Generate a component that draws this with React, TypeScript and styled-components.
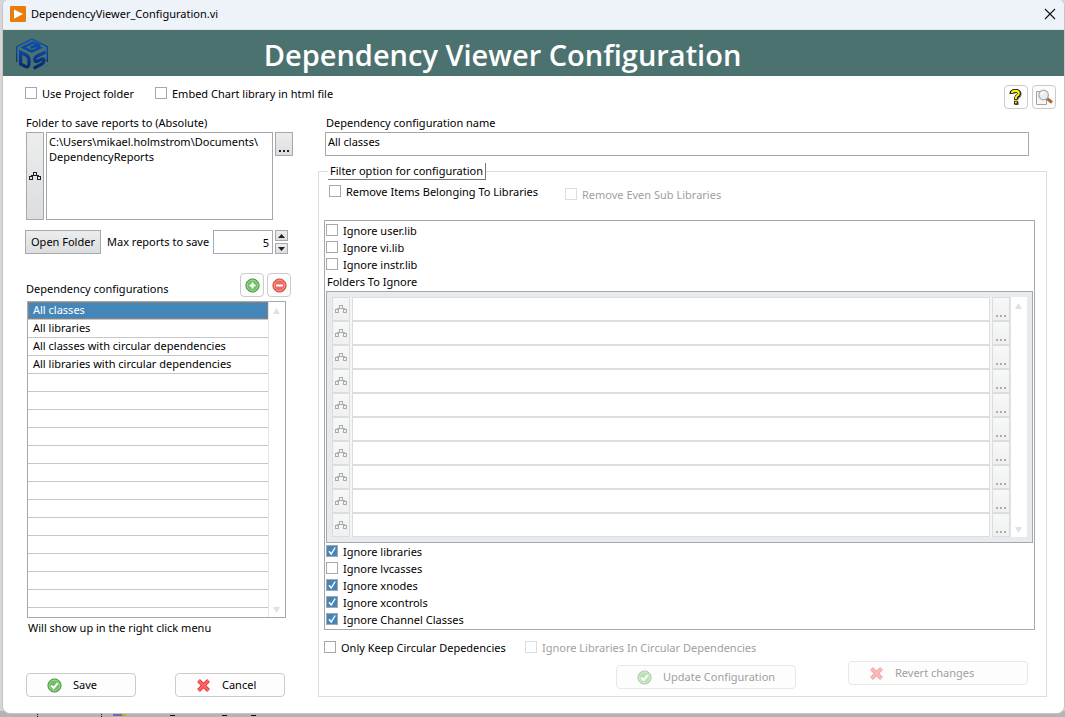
import React, { useState } from "react";
import styled, { createGlobalStyle, css } from "styled-components";

const line = "#a6a8ab";
const faint = "#dcdddf";
const accent = "#4586b8";
const font = '"Noto Sans", "Open Sans", sans-serif';

const Global = createGlobalStyle`
  *, *::before, *::after { box-sizing: border-box; }
  html, body, #root { height: 100%; }
  body {
    margin: 0;
    background: #b4b4b4;
    font: 11px/16px ${font};
    color: #000;
  }
  button, input, textarea { font: inherit; color: inherit; margin: 0; border-radius: 0; }
  button { cursor: pointer; padding: 0; }
  button:disabled { cursor: default; }
  ul { list-style: none; margin: 0; padding: 0; }
`;

const Desktop = styled.div`
  display: flex;
  flex-direction: column;
  min-height: 100%;
  padding-left: 2px;
  background: linear-gradient(#d6d6d6 0 711px, #b4b4b4 711px);
`;

const Backdrop = styled.svg`
  display: block;
  flex: none;
`;

const Window = styled.div`
  flex: 1;
  display: flex;
  flex-direction: column;
  background: #fff;
  border: 1px solid #c4c4c4;
  border-top: 0;
  border-radius: 6px 6px 8px 8px;
  overflow: hidden;
`;

const TitleBar = styled.header`
  display: flex;
  align-items: center;
  gap: 5px;
  height: 30px;
  padding: 0 8px 2px 7px;
  background: #eef3fa;
  border-bottom: 1px solid #dfe3e6;
`;

const TitleText = styled.span`
  flex: 1;
`;

const CloseButton = styled.button`
  display: flex;
  border: 0;
  background: none;
`;

const Banner = styled.div`
  display: flex;
  align-items: center;
  height: 46px;
  padding: 0 108px 0 12px;
  background: #4c7270;
`;

const Heading = styled.h1`
  flex: 1;
  margin: 0;
  text-align: center;
  color: #fff;
  font-family: "Open Sans", "Noto Sans", sans-serif;
  font-size: 29px;
  line-height: 40px;
  font-weight: 600;
  padding-top: 4px;
`;

const Options = styled.div`
  display: flex;
  align-items: flex-start;
  gap: 4px;
  height: 39px;
  padding: 9px 8px 0 22px;
`;

const OptionChecks = styled.div`
  flex: 1;
  display: grid;
  grid-template-columns: 130px 1fr;
`;

const Check = styled.label<{ $off?: boolean }>`
  display: flex;
  align-items: center;
  gap: 5px;
  height: 17px;
  white-space: nowrap;
  color: ${(p) => (p.$off ? "#a0a0a0" : "#000")};
`;

const Box = styled.input`
  && { margin-bottom: 1px; }
  appearance: none;
  flex: none;
  width: 12px;
  height: 12px;
  border: 1px solid ${line};
  background: #fff;
  &:disabled { border-color: ${faint}; }
  &:checked {
    background: ${accent} url("data:image/svg+xml,%3Csvg xmlns='http://www.w3.org/2000/svg' viewBox='0 0 10 10'%3E%3Cpath d='M2 5.2L4.2 8L8.2 1.5' fill='none' stroke='white' stroke-width='1.4'/%3E%3C/svg%3E");
  }
`;

const Columns = styled.main`
  flex: 1;
  display: grid;
  grid-template-columns: 268px minmax(0, 1fr);
  gap: 25px;
  padding: 0 17px 16px 22px;
`;

const Column = styled.section`
  display: flex;
  flex-direction: column;
  min-width: 0;
`;

const FieldLabel = styled.label`
  display: block;
  line-height: 16px;
  padding-left: 1px;
`;

const raised = css`
  border: 1px solid ${line};
  background: linear-gradient(#eceded, #dcdddf);
  &:disabled {
    border-color: ${faint};
    background: linear-gradient(#f6f7f7, #f0f0f1);
  }
`;

const PathControl = styled.div`
  display: flex;
  align-items: flex-start;
  gap: 2px;
  margin-top: 1px;
  padding-left: 1px;
`;

const GrayButton = styled.button<{ $w: number; $h: number }>`
  ${raised}
  flex: none;
  display: flex;
  align-items: center;
  justify-content: center;
  width: ${(p) => p.$w}px;
  height: ${(p) => p.$h}px;
  white-space: nowrap;
`;

const PathArea = styled.textarea`
  flex: 1;
  min-width: 0;
  height: 88px;
  padding: 1px 0 1px 2px;
  border: 1px solid ${line};
  background: #fff;
  line-height: 15px;
  resize: none;
  overflow: hidden;
  white-space: pre;
`;

const LimitRow = styled.div`
  display: flex;
  align-items: center;
  height: 24px;
  margin: 10px 5px 0 0;
`;

const LimitLabel = styled.label`
  flex: 1;
  min-width: 0;
  padding-left: 6px;
  white-space: nowrap;
`;

const LimitInput = styled.input`
  width: 60px;
  height: 24px;
  padding: 0 3px;
  border: 1px solid ${line};
  text-align: right;
`;

const Spinner = styled.div`
  display: grid;
  gap: 2px;
  width: 15px;
  padding-left: 2px;
`;

const ListHead = styled.div`
  display: flex;
  align-items: flex-end;
  gap: 3px;
  height: 24px;
  margin-top: 19px;
  padding: 0 2px 0 1px;
`;

const ListTitle = styled.h2`
  flex: 1;
  margin: 0;
  font-size: 11px;
  line-height: 16px;
  font-weight: 400;
`;

const RoundButton = styled.button<{ $w?: number }>`
  flex: none;
  display: flex;
  align-items: center;
  justify-content: ${(p) => (p.$w ? "flex-start" : "center")};
  gap: 11px;
  width: ${(p) => p.$w ?? 24}px;
  height: 24px;
  padding-left: ${(p) => (p.$w ? 20 : 0)}px;
  border: 1px solid #cbcbcb;
  border-radius: 4px;
  background: #fdfdfd;
  white-space: nowrap;
  &:disabled {
    color: #a0a0a0;
    border-color: #e8e8e8;
    svg { opacity: 0.45; }
  }
`;

const ListBox = styled.div`
  display: flex;
  height: 317px;
  margin: 4px 7px 0 2px;
  border: 1px solid ${line};
`;

const Items = styled.ul`
  flex: 1;
  overflow: hidden;
`;

const Item = styled.li`
  height: 18px;
  border-bottom: 1px solid #c6c7c9;
`;

const ItemButton = styled.button<{ $on: boolean }>`
  display: block;
  width: 100%;
  height: 17px;
  padding: 0 0 2px 4px;
  border: 1px ${(p) => (p.$on ? "dotted #c08050" : "solid transparent")};
  background: ${(p) => (p.$on ? accent : "#fff")};
  color: ${(p) => (p.$on ? "#fff" : "#000")};
  text-align: left;
  line-height: 13px;
`;

const Scroll = styled.div`
  flex: none;
  display: flex;
  flex-direction: column;
  justify-content: space-between;
  align-items: center;
  width: 17px;
  padding: 6px 1px 4px 0;
  background: #fff;
  border-left: 1px solid #e2e2e2;
`;

const Note = styled.p`
  margin: 2px 0 0 3px;
`;

const Actions = styled.div`
  display: flex;
  gap: 39px;
  margin-top: 37px;
  padding-left: 1px;
`;

const NameInput = styled.input`
  width: calc(100% - 25px);
  height: 24px;
  padding: 0 2px 5px;
  border: 1px solid ${line};
  && { margin: 1px 0 0 7px; }
`;

const NameLabel = styled(FieldLabel)`
  padding-left: 8px;
`;

const Group = styled.fieldset`
  flex: 1;
  min-width: 0;
  margin: 7px 0 0;
  padding: 0 11px 0 5px;
  border: 1px solid ${faint};
`;

const Legend = styled.legend`
  margin-left: 4px;
  padding: 0 2px;
  height: 17px;
  line-height: 16px;
  border-right: 1px solid #777;
  border-bottom: 1px solid #777;
`;

const LibraryRow = styled.div`
  display: grid;
  grid-template-columns: 236px 1fr;
  align-items: end;
  height: 23px;
  padding: 3px 0 0 5px;
  & > :first-child { align-self: start; }
`;

const CircularRow = styled.div`
  display: grid;
  grid-template-columns: 201px 1fr;
`;

const Panel = styled.div`
  margin: 17px 0 9px;
  padding: 1px;
  border: 1px solid ${line};
`;

const PanelTitle = styled.h3`
  margin: 0;
  padding-left: 1px;
  font-size: 11px;
  line-height: 17px;
  font-weight: 400;
`;

const Frame = styled.div`
  display: flex;
  margin-top: 1px;
  padding: 5px;
  border: 1px solid ${line};
  background: #e7ebee;
`;

const Rows = styled.div`
  flex: 1;
  min-width: 0;
`;

const FolderRow = styled.div`
  display: flex;
  gap: 2px;
  height: 24px;
  background: #f4f5f6;
`;

const FolderInput = styled.input`
  flex: 1;
  min-width: 0;
  height: 24px;
  border: 1px solid ${faint};
  background: #fff;
`;

const GroupActions = styled.div`
  display: flex;
  justify-content: flex-end;
  align-items: flex-start;
  gap: 52px;
  margin-top: 5px;
  padding-right: 7px;
`;

const Lowered = styled.div`
  padding-top: 4px;
`;

const Tree = ({ color = "#222" }: { color?: string }) => (
  <svg width="12" height="9" viewBox="0 0 12 9" fill="none" stroke={color} shapeRendering="crispEdges">
    <path d="M4.5 .5h3v3h-3zM.5 4.5h3v3h-3zM8.5 4.5h3v3h-3zM4 3.5H2.5V4M8 3.5H9.5V4" />
  </svg>
);

const Dots = ({ color = "#222" }: { color?: string }) => (
  <svg width="12" height="16" viewBox="0 0 12 16" fill={color} shapeRendering="crispEdges">
    <path d="M1 14h2v2H1zM5 14h2v2H5zM9 14h2v2H9z" />
  </svg>
);

const Triangle = ({ down, color = "#dfe1e3", w = 7, h = 6 }: { down?: boolean; color?: string; w?: number; h?: number }) => (
  <svg width={w} height={h} viewBox="0 0 8 6" preserveAspectRatio="none" fill={color}>
    <path d={down ? "M0 0h8L4 6z" : "M0 6h8L4 0z"} />
  </svg>
);

const Badge = ({ kind }: { kind: "plus" | "minus" | "ok" }) => {
  const red = kind === "minus";
  const mark = {
    plus: "M7.5 4.5v6M4.5 7.5h6",
    minus: "M4 7.5h7",
    ok: "M4.2 7.6l2.4 2.4L10.8 5.2",
  }[kind];
  return (
    <svg width="15" height="15" viewBox="0 0 15 15" fill="none">
      <circle cx="7.5" cy="7.5" r="6.6" fill={red ? "#e2473f" : "#4fa845"} stroke={red ? "#cf4a43" : "#4a9a41"} />
      <circle cx="7.5" cy="7.5" r="5.4" fill={red ? "#ee6a60" : "#72bf63"} stroke={red ? "#f7b3ad" : "#b9e2b0"} strokeWidth=".8" />
      <path d={mark} stroke="#fff" strokeWidth="2" />
    </svg>
  );
};

const Cross = () => (
  <svg width="15" height="15" viewBox="0 0 15 15" fill="none">
    <path d="M2.5 2.5l10 10M12.5 2.5l-10 10" stroke="#e23b3b" strokeWidth="4" />
    <path d="M2.5 2.5l10 10M12.5 2.5l-10 10" stroke="#fb6565" strokeWidth="2.4" />
  </svg>
);

const AppIcon = () => (
  <svg width="16" height="16" viewBox="0 0 16 16">
    <rect width="16" height="16" rx="1" fill="#e87c0c" />
    <path d="M4 3.5L13 8L4 12.8z" fill="#fff" />
  </svg>
);

const Logo = () => (
  <svg width="34" height="36" viewBox="0 0 34 36" fill="none">
    <defs>
      <linearGradient id="cube" x1="0" y1="0" x2="0" y2="36" gradientUnits="userSpaceOnUse">
        <stop stopColor="#0a55b8" />
        <stop offset=".5" stopColor="#08439c" />
        <stop offset="1" stopColor="#06255f" />
      </linearGradient>
    </defs>
    <g stroke="url(#cube)">
      <path d="M1.7 27V11.6L17 4L32.3 11.6V27" strokeWidth="1.4" />
      <path d="M25.4 10.6L17.8 7.6L8.2 12.4L16.8 16.4L25 12.8L20.2 10.8L15.6 12.8" strokeWidth="2.6" />
      <path d="M5.6 17.4V29L10.2 31.4Q14 33 14 28.6V25Q14 21.6 11 20z" strokeWidth="3.2" />
      <path d="M30.6 17L22 21.2Q19.8 22.4 19.8 24.8Q19.8 27.4 22.4 26.2L27 24Q29 23.2 29 25.4Q29 27.6 27 28.8L18.6 33.4" strokeWidth="3.2" />
    </g>
  </svg>
);

const HelpIcon = () => (
  <svg width="14" height="18" viewBox="0 0 14 18" fill="none">
    <path d="M4.6 5.6Q4.8 3.4 7.6 3.4Q11 3.4 11 6Q11 7.8 9 8.8Q8 9.6 8 11.6M8 13.6V17" stroke="#777" strokeWidth="3.4" />
    <path d="M2.2 5.8Q2.4 2.7 6.6 2.7Q10 2.7 10 5.4Q10 7.2 8.2 8.1Q6.8 8.8 6.8 11.8M6.8 12.8V16.4" stroke="#000" strokeWidth="3.6" />
    <path d="M2.8 5.2Q3 2.9 6.6 2.9Q9.8 2.9 9.8 5.4Q9.8 7 8 7.9Q6.8 8.6 6.8 11M6.8 13.4V15.6" stroke="#ffef00" strokeWidth="2.1" />
  </svg>
);

const FindIcon = () => (
  <svg width="18" height="18" viewBox="0 0 18 18" fill="none">
    <path d="M1.5 3.5h10v13h-10z" fill="#f7f7f7" stroke="#a3a3a3" />
    <path d="M12 10.5l5 4" stroke="#a66d3c" strokeWidth="3" />
    <circle cx="8.6" cy="7" r="4.8" fill="#e9eef2" stroke="#a8abae" strokeWidth="1.3" />
    <path d="M6 6.6Q6.4 4.4 8.6 4.2" stroke="#fff" strokeWidth="1.6" />
  </svg>
);

type CheckBoxProps = { text: string; on?: boolean; off?: boolean };

const CheckBox = ({ text, on = false, off = false }: CheckBoxProps) => (
  <Check $off={off}>
    <Box type="checkbox" defaultChecked={on} disabled={off} />
    {text}
  </Check>
);

const configs = [
  "All classes",
  "All libraries",
  "All classes with circular dependencies",
  "All libraries with circular dependencies",
];
const blankRows = Array.from({ length: 14 }, (_, i) => i);
const folders = Array.from({ length: 10 }, (_, i) => i);

export default function App() {
  const [selected, setSelected] = useState(0);
  return (
    <>
      <Global />
      <Desktop>
        <Window>
          <TitleBar>
            <AppIcon />
            <TitleText>DependencyViewer_Configuration.vi</TitleText>
            <CloseButton aria-label="Close">
              <svg width="12" height="12" viewBox="0 0 12 12" stroke="#111" strokeWidth="1.1">
                <path d="M1 1l10 10M11 1L1 11" />
              </svg>
            </CloseButton>
          </TitleBar>
          <Banner>
            <Logo />
            <Heading>Dependency Viewer Configuration</Heading>
          </Banner>
          <Options>
            <OptionChecks>
              <CheckBox text="Use Project folder" />
              <CheckBox text="Embed Chart library in html file" />
            </OptionChecks>
            <RoundButton aria-label="Help"><HelpIcon /></RoundButton>
            <RoundButton aria-label="Preview"><FindIcon /></RoundButton>
          </Options>
          <Columns>
            <Column>
              <FieldLabel htmlFor="folder">Folder to save reports to (Absolute)</FieldLabel>
              <PathControl>
                <GrayButton $w={18} $h={88} aria-label="Path type"><Tree /></GrayButton>
                <PathArea id="folder" spellCheck={false} defaultValue={"C:\\Users\\mikael.holmstrom\\Documents\\\nDependencyReports"} />
                <GrayButton $w={18} $h={24} aria-label="Browse"><Dots /></GrayButton>
              </PathControl>
              <LimitRow>
                <GrayButton $w={76} $h={24}>Open Folder</GrayButton>
                <LimitLabel htmlFor="limit">Max reports to save</LimitLabel>
                <LimitInput id="limit" defaultValue="5" />
                <Spinner>
                  <GrayButton $w={13} $h={11} aria-label="Increase"><Triangle color="#222" w={7} h={4} /></GrayButton>
                  <GrayButton $w={13} $h={11} aria-label="Decrease"><Triangle down color="#222" w={7} h={4} /></GrayButton>
                </Spinner>
              </LimitRow>
              <ListHead>
                <ListTitle>Dependency configurations</ListTitle>
                <RoundButton aria-label="Add"><Badge kind="plus" /></RoundButton>
                <RoundButton aria-label="Remove"><Badge kind="minus" /></RoundButton>
              </ListHead>
              <ListBox>
                <Items>
                  {configs.map((name, i) => (
                    <Item key={name}>
                      <ItemButton $on={i === selected} onClick={() => setSelected(i)}>{name}</ItemButton>
                    </Item>
                  ))}
                  {blankRows.map((i) => <Item key={i} />)}
                </Items>
                <Scroll><Triangle /><Triangle down /></Scroll>
              </ListBox>
              <Note>Will show up in the right click menu</Note>
              <Actions>
                <RoundButton $w={110}><Badge kind="ok" />Save</RoundButton>
                <RoundButton $w={110}><Cross />Cancel</RoundButton>
              </Actions>
            </Column>
            <Column>
              <NameLabel htmlFor="name">Dependency configuration name</NameLabel>
              <NameInput id="name" defaultValue="All classes" />
              <Group>
                <Legend>Filter option for configuration</Legend>
                <LibraryRow>
                  <CheckBox text="Remove Items Belonging To Libraries" />
                  <CheckBox text="Remove Even Sub Libraries" off />
                </LibraryRow>
                <Panel>
                  <CheckBox text="Ignore user.lib" />
                  <CheckBox text="Ignore vi.lib" />
                  <CheckBox text="Ignore instr.lib" />
                  <PanelTitle>Folders To Ignore</PanelTitle>
                  <Frame>
                    <Rows>
                      {folders.map((i) => (
                        <FolderRow key={i}>
                          <GrayButton $w={18} $h={24} disabled aria-label="Path type"><Tree color="#aaa" /></GrayButton>
                          <FolderInput disabled aria-label={`Folder ${i + 1}`} />
                          <GrayButton $w={18} $h={24} disabled aria-label="Browse"><Dots color="#aaa" /></GrayButton>
                        </FolderRow>
                      ))}
                    </Rows>
                    <Scroll><Triangle /><Triangle down /></Scroll>
                  </Frame>
                  <CheckBox text="Ignore libraries" on />
                  <CheckBox text="Ignore lvcasses" />
                  <CheckBox text="Ignore xnodes" on />
                  <CheckBox text="Ignore xcontrols" on />
                  <CheckBox text="Ignore Channel Classes" on />
                </Panel>
                <CircularRow>
                  <CheckBox text="Only Keep Circular Depedencies" />
                  <CheckBox text="Ignore Libraries In Circular Dependencies" off />
                </CircularRow>
                <GroupActions>
                  <Lowered>
                    <RoundButton $w={180} disabled><Badge kind="ok" />Update Configuration</RoundButton>
                  </Lowered>
                  <RoundButton $w={180} disabled><Cross />Revert changes</RoundButton>
                </GroupActions>
              </Group>
            </Column>
          </Columns>
        </Window>
        <Backdrop width="260" height="3" viewBox="0 0 260 3" shapeRendering="crispEdges" aria-hidden="true">
          <path d="M35 0h1v1h-1zM35 2h1v1h-1zM99 0h1v1h-1zM99 2h1v1h-1zM168 1h5v1h-5zM220 1h5v1h-5zM249 1h5v1h-5z" fill="#111" />
          <path d="M111 0h9v2h-9z" fill="#6a6ab0" />
          <path d="M120 0h4v2h-4z" fill="#c0b020" />
        </Backdrop>
      </Desktop>
    </>
  );
}
